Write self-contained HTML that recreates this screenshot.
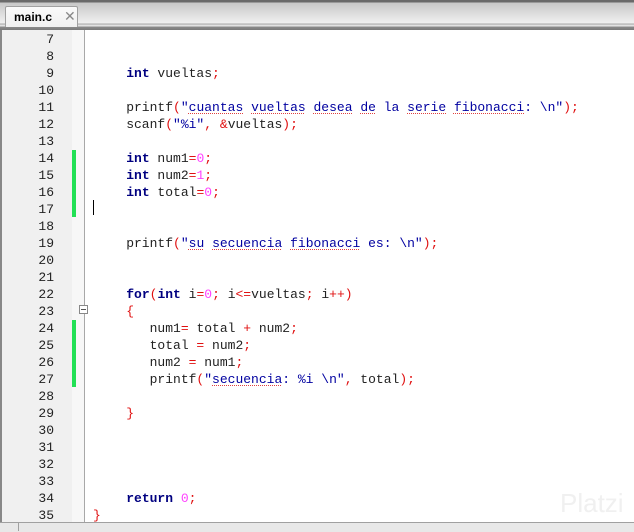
<!DOCTYPE html><html><head><style>
body{margin:0;width:634px;height:531px;overflow:hidden;background:#fff;position:relative;font-family:"Liberation Mono",monospace}
.top{position:absolute;left:0;top:0;width:634px;height:30px;background:linear-gradient(#6a6a6a 0,#6a6a6a 2px,#c8c8c8 3px,#f0f0f0 23px,#a8a8a8 24px,#dcdcdc 25px,#e8e8e8 26px,#8a8a8a 27px,#7a7a7a 30px)}
.tab{position:absolute;left:5px;top:6px;width:71px;height:20px;background:linear-gradient(#fafafa,#f0f0f0);border:1px solid #a0a0a0;border-bottom:none;border-radius:2px 2px 0 0;font:bold 12px "Liberation Sans",sans-serif;}
.tab b{position:absolute;left:8px;top:3px}
.tab i{position:absolute;left:58px;top:1px;font:normal 14px "Liberation Sans",sans-serif;color:#888;font-style:normal}
.gut{position:absolute;left:0;top:30px;width:72px;height:492px;background:#f0f0f0;border-left:2px solid #888;box-sizing:border-box}
.dot{position:absolute;left:72px;top:30px;width:12px;height:492px;background:#f7f7f7}
.sep{position:absolute;left:84px;top:30px;width:1px;height:492px;background:#a8a8a8}
.gb{position:absolute;left:72px;width:4px;background:#22e055}
.ln{position:absolute;left:0;width:54px;text-align:right;font-size:13px;color:#222;line-height:17px}
.c{position:absolute;left:95px;font-size:13px;line-height:17px;white-space:pre;color:#222}
.k{color:#000080;font-weight:bold}.o{color:#e01010}.n{color:#ff40ff}.s{color:#0000a0}
.w{text-decoration:underline dotted #e04040;text-decoration-thickness:1px;text-underline-offset:2px}
.sb{position:absolute;left:0;top:522px;width:634px;height:9px;background:#e8e8e8;border-top:1px solid #a0a0a0}
</style></head><body>
<div class="top"></div>
<div class="tab"><b>main.c</b><i>✕</i></div>
<div class="gut"></div><div class="dot"></div><div class="sep"></div>
<div class="gb" style="top:150px;height:67px"></div>
<div class="gb" style="top:320px;height:67px"></div>
<div style="position:absolute;left:79px;top:305px;width:9px;height:9px;border:1px solid #888;background:#fff;box-sizing:border-box"><div style="position:absolute;left:1px;top:3px;width:5px;height:1px;background:#555"></div></div>
<div style="position:absolute;left:93px;top:200px;width:1px;height:15px;background:#000"></div>
<div id="L"></div>
<div class="c" style="top:65px">    <span class="k">int</span> vueltas<span class="o">;</span></div>
<div class="c" style="top:99px">    printf<span class="o">(</span><span class="s">"<span class="w">cuantas</span> <span class="w">vueltas</span> <span class="w">desea</span> <span class="w">de</span> la <span class="w">serie</span> <span class="w">fibonacci</span>: \n"</span><span class="o">);</span></div>
<div class="c" style="top:116px">    scanf<span class="o">(</span><span class="s">"%i"</span><span class="o">,</span> <span class="o">&amp;</span>vueltas<span class="o">);</span></div>
<div class="c" style="top:150px">    <span class="k">int</span> num1<span class="o">=</span><span class="n">0</span><span class="o">;</span></div>
<div class="c" style="top:167px">    <span class="k">int</span> num2<span class="o">=</span><span class="n">1</span><span class="o">;</span></div>
<div class="c" style="top:184px">    <span class="k">int</span> total<span class="o">=</span><span class="n">0</span><span class="o">;</span></div>
<div class="c" style="top:235px">    printf<span class="o">(</span><span class="s">"<span class="w">su</span> <span class="w">secuencia</span> <span class="w">fibonacci</span> es: \n"</span><span class="o">);</span></div>
<div class="c" style="top:286px">    <span class="k">for</span><span class="o">(</span><span class="k">int</span> i<span class="o">=</span><span class="n">0</span><span class="o">;</span> i<span class="o">&lt;=</span>vueltas<span class="o">;</span> i<span class="o">++)</span></div>
<div class="c" style="top:303px">    <span class="o">{</span></div>
<div class="c" style="top:320px">       num1<span class="o">=</span> total <span class="o">+</span> num2<span class="o">;</span></div>
<div class="c" style="top:337px">       total <span class="o">=</span> num2<span class="o">;</span></div>
<div class="c" style="top:354px">       num2 <span class="o">=</span> num1<span class="o">;</span></div>
<div class="c" style="top:371px">       printf<span class="o">(</span><span class="s">"<span class="w">secuencia</span>: %i \n"</span><span class="o">,</span> total<span class="o">);</span></div>
<div class="c" style="top:405px">    <span class="o">}</span></div>
<div class="c" style="top:490px">    <span class="k">return</span> <span class="n">0</span><span class="o">;</span></div>
<div class="c" style="top:507px;left:93px"><span class="o">}</span></div>
<div style="position:absolute;left:560px;top:488px;font:26px 'Liberation Sans',sans-serif;color:#f0f0f0">Platzi</div>
<div class="sb"></div>
<div style="position:absolute;left:18px;top:522px;width:1px;height:9px;background:#a0a0a0"></div>
<script>
var h='';for(var i=7;i<=35;i++){h+='<div class="ln" style="top:'+(31+(i-7)*17)+'px">'+i+'</div>';}
document.getElementById('L').innerHTML=h;
</script>
</body></html>
